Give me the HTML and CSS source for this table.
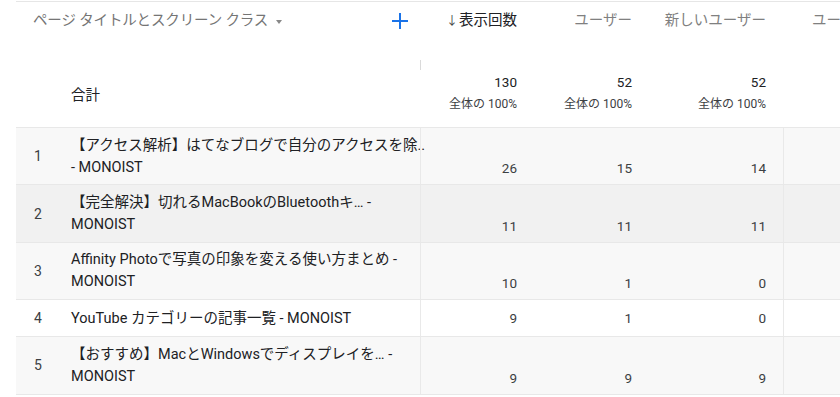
FILE: index.html
```html
<!DOCTYPE html>
<html lang="ja">
<head>
<meta charset="utf-8">
<link rel="stylesheet" href="styles.css">
</head>
<body>
<div class="table">
  <div class="row head">
    <div class="cell dim-head">
      <span class="dim-label">ページ タイトルとスクリーン クラス</span>
      <span class="caret"></span>
      <svg class="plus" width="16" height="16" viewBox="0 0 16 16"><path d="M8 0v16M0 8h16" stroke="#1a73e8" stroke-width="2" fill="none"/></svg>
    </div>
    <div class="cell num h-active"><span class="arrow">↓</span>表示回数</div>
    <div class="cell num h">ユーザー</div>
    <div class="cell num h wide">新しいユーザー</div>
    <div class="cell h extra">ユー</div>
  </div>
  <div class="row total">
    <div class="cell title-cell"><span class="total-label">合計</span></div>
    <div class="cell num tot"><span class="v">130</span><span class="p">全体の 100%</span><i class="handle"></i></div>
    <div class="cell num tot"><span class="v">52</span><span class="p">全体の 100%</span></div>
    <div class="cell num tot wide"><span class="v">52</span><span class="p">全体の 100%</span></div>
    <div class="cell"></div>
  </div>
  <div class="row data shade">
    <div class="cell title-cell"><span class="rank">1</span><span class="title"><span class="line">【アクセス解析】はてなブログで自分のアクセスを除..</span><span class="line">- MONOIST</span></span></div>
    <div class="cell num val">26</div>
    <div class="cell num val">15</div>
    <div class="cell num val wide">14</div>
    <div class="cell last"></div>
  </div>
  <div class="row data hover">
    <div class="cell title-cell"><span class="rank">2</span><span class="title"><span class="line">【完全解決】切れるMacBookのBluetoothキ… -</span><span class="line">MONOIST</span></span></div>
    <div class="cell num val">11</div>
    <div class="cell num val">11</div>
    <div class="cell num val wide">11</div>
    <div class="cell last"></div>
  </div>
  <div class="row data shade">
    <div class="cell title-cell"><span class="rank">3</span><span class="title"><span class="line">Affinity Photoで写真の印象を変える使い方まとめ -</span><span class="line">MONOIST</span></span></div>
    <div class="cell num val">10</div>
    <div class="cell num val">1</div>
    <div class="cell num val wide">0</div>
    <div class="cell last"></div>
  </div>
  <div class="row data single">
    <div class="cell title-cell"><span class="rank">4</span><span class="title"><span class="line">YouTube カテゴリーの記事一覧 - MONOIST</span></span></div>
    <div class="cell num val">9</div>
    <div class="cell num val">1</div>
    <div class="cell num val wide">0</div>
    <div class="cell last"></div>
  </div>
  <div class="row data shade">
    <div class="cell title-cell"><span class="rank">5</span><span class="title"><span class="line">【おすすめ】MacとWindowsでディスプレイを… -</span><span class="line">MONOIST</span></span></div>
    <div class="cell num val">9</div>
    <div class="cell num val">9</div>
    <div class="cell num val wide">9</div>
    <div class="cell last"></div>
  </div>
</div>
</body>
</html>
```
FILE: styles.css
```css
* { box-sizing: border-box; }
html, body { margin: 0; padding: 0; background: #fff; }
body {
  font-family: Roboto, "Noto Sans CJK JP", sans-serif;
  color: #202124;
  width: 840px;
  height: 397px;
  overflow: hidden;
}
.table {
  margin-left: 16px;
  border-top: 1px solid #e6e6e6;
  margin-top: 1px;
}
.row {
  display: grid;
  grid-template-columns: 404px 107px 115px 141px 1fr;
}
.cell { position: relative; }
.num { text-align: right; padding-right: 10px; }
.num.wide { padding-right: 17px; }

/* header */
.head { height: 56px; }
.head .cell { padding-top: 9px; font-size: 14.5px; line-height: 20px; white-space: nowrap; }
.dim-head {
  display: flex;
  align-items: center;
  height: 29px;
  padding-left: 17px;
  color: #757575;
}
.dim-label { letter-spacing: -0.15px; }
.caret {
  width: 0; height: 0;
  border-left: 3.5px solid transparent;
  border-right: 3.5px solid transparent;
  border-top: 4px solid #888;
  margin-left: 8px;
  margin-top: 1px;
}
.plus { position: absolute; right: 12px; top: 11px; }
.h { color: #808080; }
.h-active { color: #202124; }
.arrow { font-size: 12px; color: #444; margin-right: 1px; }
.extra { padding-left: 29px; overflow: hidden; }

/* total */
.total { height: 70px; border-bottom: 1px solid #e8e8e8; }
.total .title-cell { display: flex; align-items: center; padding-left: 55px; font-size: 14.5px; padding-top: 2px; }
.tot {
  display: flex;
  flex-direction: column;
  align-items: flex-end;
  justify-content: center;
  padding-top: 1px;
}
.tot .v { font-size: 13.5px; line-height: 22px; color: #202124; }
.tot .p { font-size: 12px; line-height: 22px; color: #3c4043; }
.handle {
  position: absolute;
  left: 0; top: 2px;
  width: 1px; height: 10px;
  background: #dadada;
}

/* data rows */
.data { border-bottom: 1px solid #e8e8e8; height: 57.4px; }
.data.single { height: 37px; }
.shade { background: #f8f8f8; }
.hover { background: #f1f1f1; }
.data .cell:nth-child(2) { border-left: 1px solid #e9e9e9; }
.data .cell.last { border-left: 1px solid #e9e9e9; }
.title-cell { display: flex; }
.data .title-cell { align-items: center; }
.rank {
  width: 55px;
  flex: none;
  padding-left: 18px;
  font-size: 14px;
  color: #3c4043;
}
.title {
  display: flex;
  flex-direction: column;
  font-size: 14.5px;
  line-height: 22px;
  color: #202124;
  padding-top: 1px;
}
.line { white-space: nowrap; }
.val {
  display: flex;
  align-items: flex-end;
  justify-content: flex-end;
  font-size: 13.5px;
  color: #3c4043;
  line-height: 22px;
  padding-bottom: 5px;
}
.single .val { align-items: center; padding-bottom: 0; }
```
